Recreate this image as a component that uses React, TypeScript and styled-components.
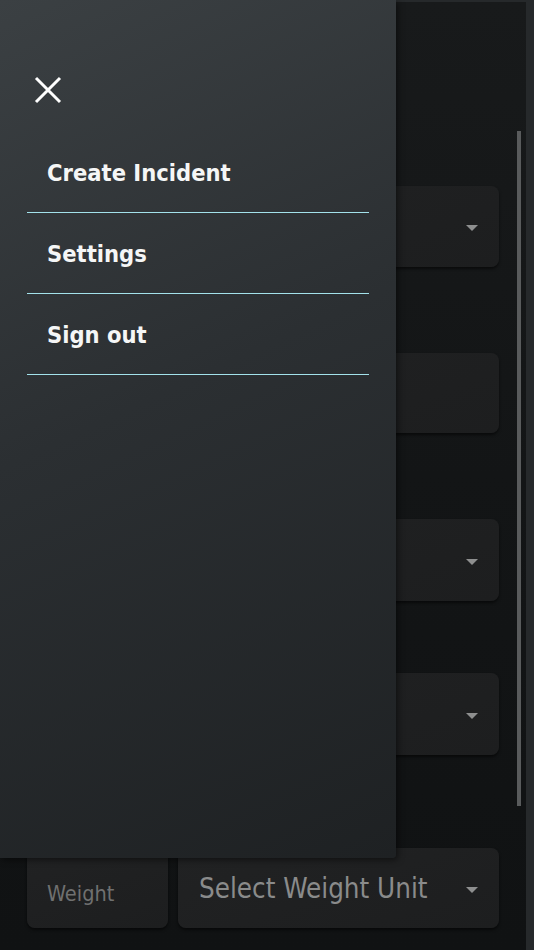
import React from "react";
import styled, { createGlobalStyle } from "styled-components";

const GlobalStyle = createGlobalStyle`
  html, body { margin: 0; padding: 0; background: #26292b; }
  body { font-family: "DejaVu Sans Condensed", "DejaVu Sans", sans-serif; }
  * { box-sizing: border-box; }
`;

const Screen = styled.div`
  position: relative;
  width: 534px;
  height: 950px;
  padding: 2px 8px 0 0;
  background: #26292b;
  overflow: hidden;
  display: flex;
`;

const Main = styled.main`
  position: relative;
  flex: 1;
  background: linear-gradient(180deg, #181a1b 0%, #131516 50%, #101213 100%);
  padding: 0 27px;
  display: flex;
  flex-direction: column;
`;

const Field = styled.div<{ $top: number; $h?: number }>`
  margin-top: ${(p) => p.$top}px;
  height: ${(p) => p.$h ?? 81}px;
  border-radius: 8px;
  background: linear-gradient(160deg, #212223 0%, #1d1e1f 100%);
  box-shadow: 0 2px 3px rgba(0, 0, 0, 0.55);
  display: flex;
  align-items: center;
  justify-content: space-between;
  padding: 0 21px 0 21px;
`;

const Row = styled.div<{ $top: number }>`
  margin-top: ${(p) => p.$top}px;
  height: 80px;
  display: flex;
  gap: 10px;
`;

const WeightInput = styled.div`
  width: 141px;
  height: 80px;
  border-radius: 8px;
  background: linear-gradient(160deg, #212223 0%, #1d1e1f 100%);
  box-shadow: 0 2px 3px rgba(0, 0, 0, 0.55);
  display: flex;
  align-items: center;
  padding: 10px 0 0 20px;
  font-size: 21.5px;
  color: #6f7070;
`;

const UnitSelect = styled.div`
  flex: 1;
  height: 80px;
  border-radius: 8px;
  background: linear-gradient(160deg, #212223 0%, #1d1e1f 100%);
  box-shadow: 0 2px 3px rgba(0, 0, 0, 0.55);
  display: flex;
  align-items: center;
  justify-content: space-between;
  padding: 0 21px 0 21px;
  font-size: 27.5px;
  color: #8a8b8b;
`;

const Caret = styled.span`
  width: 0;
  height: 0;
  margin-top: 3px;
  border-left: 6.5px solid transparent;
  border-right: 6.5px solid transparent;
  border-top: 6px solid #8e8f8f;
`;

const Scrollbar = styled.div`
  position: absolute;
  right: 5px;
  top: 129px;
  width: 4px;
  height: 675px;
  background: #595b5c;
`;

const Drawer = styled.nav`
  position: absolute;
  top: 0;
  left: 0;
  width: 396px;
  height: 858px;
  background: linear-gradient(155deg, #3b4043 0%, #2b2f32 45%, #1e2123 100%);
  border-bottom-right-radius: 4px;
  box-shadow: 2px 2px 6px rgba(0, 0, 0, 0.5);
  padding: 76px 27px 0;
`;

const CloseButton = styled.button`
  display: block;
  margin-left: 7px;
  width: 28px;
  height: 28px;
  padding: 0;
  border: 0;
  background: none;
  cursor: pointer;
  svg { display: block; }
`;

const Menu = styled.ul`
  list-style: none;
  margin: 28px 0 0;
  padding: 0;
`;

const MenuItem = styled.li`
  height: 81px;
  padding: 30px 0 0 20px;
  border-bottom: 1px solid #a3e2eb;
  font-size: 23.5px;
  line-height: 1;
  font-weight: 700;
  color: #f5f6f6;
`;

export default function App() {
  return (
    <>
      <GlobalStyle />
      <Screen>
        <Main>
          <Field $top={184}>
            <span />
            <Caret />
          </Field>
          <Field $top={86} $h={80}>
            <span />
          </Field>
          <Field $top={86} $h={82}>
            <span />
            <Caret />
          </Field>
          <Field $top={72} $h={82}>
            <span />
            <Caret />
          </Field>
          <Row $top={93}>
            <WeightInput>Weight</WeightInput>
            <UnitSelect>
              <span>Select Weight Unit</span>
              <Caret />
            </UnitSelect>
          </Row>
          <Scrollbar />
        </Main>
        <Drawer>
          <CloseButton aria-label="Close">
            <svg width="28" height="28" viewBox="0 0 28 28">
              <path d="M2 2 L26 26 M26 2 L2 26" stroke="#ffffff" strokeWidth="3" fill="none" />
            </svg>
          </CloseButton>
          <Menu>
            <MenuItem>Create Incident</MenuItem>
            <MenuItem>Settings</MenuItem>
            <MenuItem>Sign out</MenuItem>
          </Menu>
        </Drawer>
      </Screen>
    </>
  );
}
